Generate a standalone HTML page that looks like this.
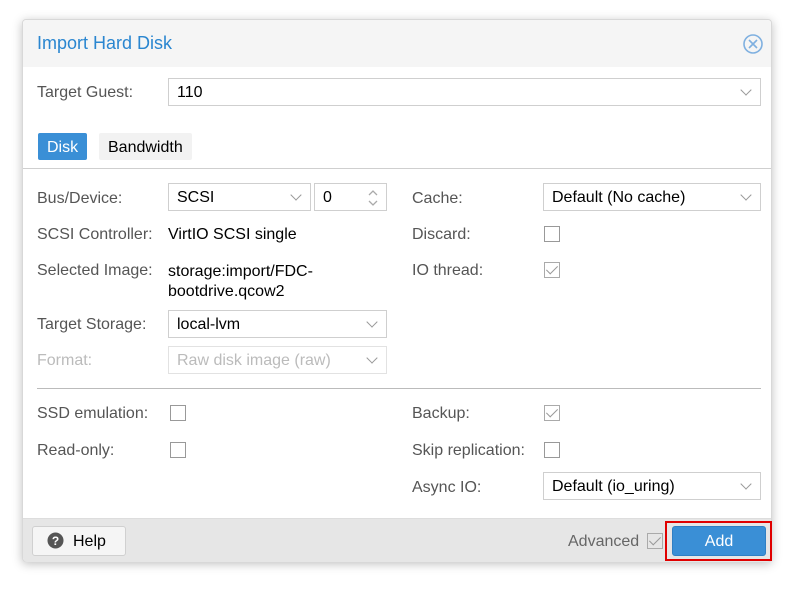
<!DOCTYPE html>
<html><head><style>
*{box-sizing:border-box;margin:0;padding:0}
body{width:795px;height:590px;background:#fff;font-family:"Liberation Sans",Arial,sans-serif;font-size:16px;color:#000;position:relative;overflow:hidden}
.dlg{position:absolute;left:22px;top:19px;width:750px;height:543px;background:#fff;border:1px solid #d8d8d8;border-radius:4px;box-shadow:0 2px 10px rgba(0,0,0,.25)}
.a{position:absolute}
.lbl{position:absolute;color:#555;font-size:16px}
.inp{position:absolute;border:1px solid #cfcfcf;background:#fff;height:28px;padding:5px 8px;font-size:16px;line-height:17px}
.dd::after{content:"";position:absolute;right:10px;top:7px;width:7px;height:7px;border-right:1.5px solid #999;border-bottom:1.5px solid #999;transform:rotate(45deg)}
.cb{position:absolute;width:16px;height:16px;border:1px solid #999;background:#fff}
.ck::after{content:"";position:absolute;left:4px;top:0px;width:5px;height:10px;border-right:1.5px solid #999;border-bottom:1.5px solid #999;transform:rotate(45deg)}
.ck{border-color:#aaa}
</style></head><body>
<div class="dlg">
<div class="a" style="left:0;top:0;width:748px;height:47px;background:#f5f5f5;border-radius:4px 4px 0 0"></div>
<div class="a" style="left:14px;top:13px;font-size:18px;color:#2a86d0">Import Hard Disk</div>
<svg class="a" style="left:719px;top:13px" width="22" height="22" viewBox="0 0 22 22"><circle cx="11" cy="11" r="9" fill="none" stroke="#7fb0e0" stroke-width="1.6"/><path d="M7 7L15 15M15 7L7 15" stroke="#7fb0e0" stroke-width="1.6"/></svg>
<div class="a" style="left:0;top:498px;width:748px;height:44px;background:#e6e6e6;border-top:1px solid #ddd;border-radius:0 0 4px 4px"></div>
</div>
<div class="lbl" style="left:37px;top:84px">Target Guest:</div>
<div class="inp dd" style="left:168px;top:78px;width:593px">110</div>
<div class="a" style="left:38px;top:133px;width:49px;height:27px;background:#3a8fd6;color:#fff;border-radius:2px;padding:6px 9px">Disk</div>
<div class="a" style="left:99px;top:133px;width:93px;height:27px;background:#f2f2f2;border-radius:2px;padding:6px 9px">Bandwidth</div>
<div class="a" style="left:23px;top:168px;width:748px;height:1px;background:#cfcfcf"></div>

<div class="lbl" style="left:37px;top:190px">Bus/Device:</div>
<div class="inp dd" style="left:168px;top:183px;width:143px">SCSI</div>
<div class="inp" style="left:314px;top:183px;width:73px">0
<svg class="a" style="right:7px;top:3px" width="12" height="22" viewBox="0 0 12 22"><path d="M2 8L6 4L10 8M2 14L6 18L10 14" fill="none" stroke="#aaa" stroke-width="1.3"/></svg></div>
<div class="lbl" style="left:412px;top:190px">Cache:</div>
<div class="inp dd" style="left:543px;top:183px;width:218px">Default (No cache)</div>

<div class="lbl" style="left:37px;top:226px">SCSI Controller:</div>
<div class="a" style="left:168px;top:226px">VirtIO SCSI single</div>
<div class="lbl" style="left:412px;top:226px">Discard:</div>
<div class="cb" style="left:544px;top:226px"></div>

<div class="lbl" style="left:37px;top:262px">Selected Image:</div>
<div class="a" style="left:168px;top:262px;line-height:20px">storage:import/FDC-<br>bootdrive.qcow2</div>
<div class="lbl" style="left:412px;top:262px">IO thread:</div>
<div class="cb ck" style="left:544px;top:262px"></div>

<div class="lbl" style="left:37px;top:316px">Target Storage:</div>
<div class="inp dd" style="left:168px;top:310px;width:219px">local-lvm</div>
<div class="lbl" style="left:37px;top:352px;color:#bbb">Format:</div>
<div class="inp dd" style="left:168px;top:346px;width:219px;color:#bbb;border-color:#e2e2e2">Raw disk image (raw)</div>

<div class="a" style="left:37px;top:388px;width:724px;height:1px;background:#bbb"></div>

<div class="lbl" style="left:37px;top:405px">SSD emulation:</div>
<div class="cb" style="left:170px;top:405px"></div>
<div class="lbl" style="left:412px;top:405px">Backup:</div>
<div class="cb ck" style="left:544px;top:405px"></div>
<div class="lbl" style="left:37px;top:442px">Read-only:</div>
<div class="cb" style="left:170px;top:442px"></div>
<div class="lbl" style="left:412px;top:442px">Skip replication:</div>
<div class="cb" style="left:544px;top:442px"></div>
<div class="lbl" style="left:412px;top:479px">Async IO:</div>
<div class="inp dd" style="left:543px;top:472px;width:218px">Default (io_uring)</div>

<div class="a" style="left:32px;top:526px;width:94px;height:30px;background:#f5f5f5;border:1px solid #d0d0d0;border-radius:3px;padding:6px 0 0 40px">Help</div>
<svg class="a" style="left:47px;top:532px" width="17" height="17" viewBox="0 0 17 17"><circle cx="8.5" cy="8.5" r="8" fill="#555"/><text x="8.5" y="13" font-size="12" font-weight="bold" fill="#fff" text-anchor="middle" font-family="Liberation Sans">?</text></svg>
<div class="lbl" style="left:568px;top:533px;color:#666">Advanced</div>
<div class="cb ck" style="left:647px;top:533px;background:transparent"></div>
<div class="a" style="left:665px;top:521px;width:107px;height:40px;border:2px solid #e00000"></div>
<div class="a" style="left:672px;top:526px;width:94px;height:30px;background:#3a8fd6;border:1px solid #2f7fc4;border-radius:3px;color:#fff;text-align:center;padding-top:6px">Add</div>
</body></html>
